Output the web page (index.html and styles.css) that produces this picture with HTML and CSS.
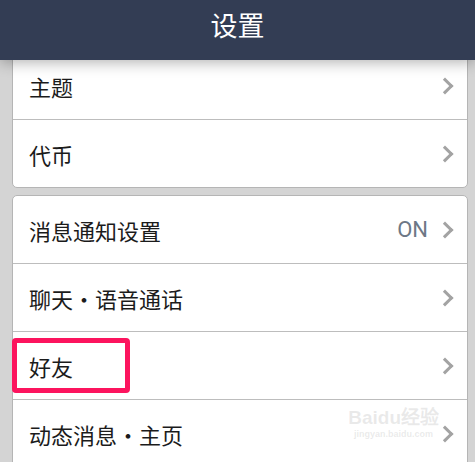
FILE: index.html
```html
<!DOCTYPE html>
<html lang="zh-CN">
<head>
<meta charset="utf-8">
<title>设置</title>
<link rel="stylesheet" href="styles.css">
</head>
<body>
<header class="topbar"><h1 class="title">设置</h1></header>
<main class="scroller">
  <section class="card card-first">
    <div class="row"><span class="label">主题</span><span class="chev"></span></div>
    <div class="row"><span class="label">代币</span><span class="chev"></span></div>
  </section>
  <section class="card">
    <div class="row"><span class="label">消息通知设置</span><span class="value">ON</span><span class="chev"></span></div>
    <div class="row"><span class="label">聊天・语音通话</span><span class="chev"></span></div>
    <div class="row"><span class="label">好友</span><span class="chev"></span><span class="mark"></span></div>
    <div class="row"><span class="label">动态消息<span class="dot">·</span>主页</span><span class="chev"></span></div>
  </section>
  <div class="watermark"><span class="wm-big">Baidu经验</span><span class="wm-small">jingyan.baidu.com</span></div>
</main>
</body>
</html>
```
FILE: styles.css
```css
* { box-sizing: border-box; }
html, body { margin: 0; padding: 0; }
body {
  width: 475px;
  height: 462px;
  overflow: hidden;
  background: #d4d4d4;
  font-family: "Noto Sans CJK SC", "Noto Sans", sans-serif;
}
.topbar {
  position: relative;
  z-index: 2;
  height: 60px;
  background: #333d54;
  display: flex;
  align-items: center;
  justify-content: center;
  box-shadow: 0 2px 14px rgba(0, 0, 0, 0.32);
}
.title {
  margin: 0 0 12px 0;
  color: #ffffff;
  font-size: 27px;
  font-weight: 400;
}
.scroller {
  position: relative;
  height: 402px;
  overflow: hidden;
  padding: 0 7px 0 12px;
  display: flex;
  flex-direction: column;
  gap: 7px;
}
.card {
  background: #ffffff;
  border: 1px solid #b5b5b5;
  border-radius: 5px;
  flex: none;
}
.card-first {
  margin-top: -9px;
}
.row {
  position: relative;
  height: 68px;
  display: flex;
  align-items: center;
  padding: 0 12px 0 16px;
  border-bottom: 1px solid #bdbdbd;
}
.row:last-child { border-bottom: none; height: 67px; }
.label {
  flex: 1;
  font-size: 22px;
  color: #1b1b1b;
}
.dot {
  display: inline-block;
  width: 22px;
  text-align: center;
}
.value {
  font-size: 22px;
  color: #6d7886;
  margin-right: 11px;
  font-family: "Roboto", "Noto Sans", sans-serif;
}
.chev {
  width: 12px;
  height: 12px;
  border-top: 3px solid #a3a3a3;
  border-right: 3px solid #a3a3a3;
  transform: rotate(45deg);
  margin-right: 4px;
}
.mark {
  position: absolute;
  left: -1px;
  top: 6px;
  width: 118px;
  height: 55px;
  border: 5px solid #fc145e;
  border-radius: 4px;
}
.watermark {
  position: absolute;
  right: 36px;
  top: 342px;
  display: flex;
  flex-direction: column;
  align-items: center;
  color: rgba(180, 180, 180, 0.28);
  font-family: "Liberation Sans", sans-serif;
  pointer-events: none;
}
.wm-big { font-size: 19px; font-weight: 700; }
.wm-small { font-size: 9px; font-weight: 700; }
```
